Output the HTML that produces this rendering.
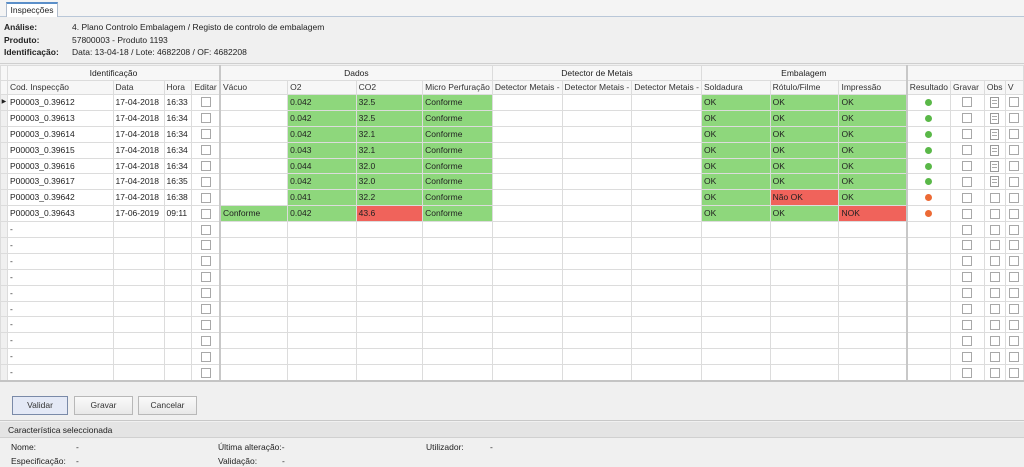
<!DOCTYPE html>
<html><head><meta charset="utf-8"><style>
*{box-sizing:border-box;margin:0;padding:0}
body{width:1024px;height:467px;overflow:hidden;background:#f0f0f0;font-family:"Liberation Sans",sans-serif;font-size:8.5px;color:#222;position:relative}
.abs{position:absolute}
.tabbar{left:0;top:0;width:1024px;height:17px;border-bottom:1px solid #b9c7d8;background:#f4f4f4}
.tab{left:6px;top:2px;width:52px;height:15px;background:#fff;border:1px solid #b0bccc;border-bottom:none;border-top:2px solid #5b8fc9;text-align:center;line-height:12px;font-size:8.5px}
.lbl{font-weight:bold;left:4px}
table{position:absolute;left:0;top:65px;border-collapse:collapse;table-layout:fixed;background:#fff}
td{border:1px solid #dcdcdc;height:15.9px;padding:0 2px;white-space:nowrap;overflow:hidden;font-size:8.5px;line-height:13px}
tr.h td{background:#f7f7f7;height:14px;color:#333}
tr.g td{text-align:center;height:15px;background:#f7f7f7}
.g0{background:#8ed77c!important}.r0{background:#f0635b!important}
.sep{border-right:2px solid #c8c8c8}
.ind{background:#f0f0f0;padding:0;text-align:center;font-size:6px}
.cb{display:block;margin:0 auto;width:10px;height:10px;border:1px solid #a8a8a8;background:#fff}
.dot{display:block;margin:0 auto;width:7px;height:7px;border-radius:50%;background:#5ab848}
.dot.o{background:#ec6a35}
.doc{display:block;margin:0 auto;width:9px;height:11px;border:1px solid #999;background:repeating-linear-gradient(#fff 0 2px,#aaa 2px 3px);background-clip:content-box;padding:2px 1px}
.btn{top:396px;height:19px;border:1px solid #b8b8b8;background:linear-gradient(#fafafa,#e8e8e8);text-align:center;line-height:17px;font-size:8.5px;color:#333}
</style></head><body>
<div class="abs tabbar"></div>
<div class="abs tab">Inspecções</div>
<div class="abs lbl" style="top:22px">Análise:</div><div class="abs" style="left:72px;top:22px">4. Plano Controlo Embalagem / Registo de controlo de embalagem</div>
<div class="abs lbl" style="top:35px">Produto:</div><div class="abs" style="left:72px;top:35px">57800003 - Produto 1193</div>
<div class="abs lbl" style="top:47px">Identificação:</div><div class="abs" style="left:72px;top:47px">Data: 13-04-18 / Lote: 4682208 / OF: 4682208</div>
<div class="abs" style="left:0;top:63px;width:1024px;height:1px;background:#cfcfcf"></div>
<table>
<colgroup><col style="width:7px"><col style="width:106px"><col style="width:51px"><col style="width:28px"><col style="width:28px"><col style="width:68px"><col style="width:69px"><col style="width:67px"><col style="width:69px"><col style="width:68px"><col style="width:68px"><col style="width:67px"><col style="width:69px"><col style="width:69px"><col style="width:68px"><col style="width:43px"><col style="width:34px"><col style="width:21px"><col style="width:18px"></colgroup>
<tr class="g"><td class="ind"></td><td colspan="4" class="sep">Identificação</td><td colspan="4">Dados</td><td colspan="3">Detector de Metais</td><td colspan="3" class="sep">Embalagem</td><td colspan="4"></td></tr>
<tr class="h"><td class="ind"></td><td>Cod. Inspecção</td><td>Data</td><td>Hora</td><td class="sep">Editar</td><td>Vácuo</td><td>O2</td><td>CO2</td><td>Micro Perfuração</td><td>Detector Metais -</td><td>Detector Metais -</td><td>Detector Metais -</td><td>Soldadura</td><td>Rótulo/Filme</td><td class="sep">Impressão</td><td>Resultado</td><td>Gravar</td><td>Obs</td><td>V</td></tr>
<tr><td class="ind">▶</td><td>P00003_0.39612</td><td>17-04-2018</td><td>16:33</td><td class="sep"><i class="cb"></i></td><td></td><td class="g0">0.042</td><td class="g0">32.5</td><td class="g0">Conforme</td><td></td><td></td><td></td><td class="g0">OK</td><td class="g0">OK</td><td class="g0 sep">OK</td><td><i class="dot"></i></td><td><i class="cb"></i></td><td><i class="doc"></i></td><td><i class="cb"></i></td></tr>
<tr><td class="ind"></td><td>P00003_0.39613</td><td>17-04-2018</td><td>16:34</td><td class="sep"><i class="cb"></i></td><td></td><td class="g0">0.042</td><td class="g0">32.5</td><td class="g0">Conforme</td><td></td><td></td><td></td><td class="g0">OK</td><td class="g0">OK</td><td class="g0 sep">OK</td><td><i class="dot"></i></td><td><i class="cb"></i></td><td><i class="doc"></i></td><td><i class="cb"></i></td></tr>
<tr><td class="ind"></td><td>P00003_0.39614</td><td>17-04-2018</td><td>16:34</td><td class="sep"><i class="cb"></i></td><td></td><td class="g0">0.042</td><td class="g0">32.1</td><td class="g0">Conforme</td><td></td><td></td><td></td><td class="g0">OK</td><td class="g0">OK</td><td class="g0 sep">OK</td><td><i class="dot"></i></td><td><i class="cb"></i></td><td><i class="doc"></i></td><td><i class="cb"></i></td></tr>
<tr><td class="ind"></td><td>P00003_0.39615</td><td>17-04-2018</td><td>16:34</td><td class="sep"><i class="cb"></i></td><td></td><td class="g0">0.043</td><td class="g0">32.1</td><td class="g0">Conforme</td><td></td><td></td><td></td><td class="g0">OK</td><td class="g0">OK</td><td class="g0 sep">OK</td><td><i class="dot"></i></td><td><i class="cb"></i></td><td><i class="doc"></i></td><td><i class="cb"></i></td></tr>
<tr><td class="ind"></td><td>P00003_0.39616</td><td>17-04-2018</td><td>16:34</td><td class="sep"><i class="cb"></i></td><td></td><td class="g0">0.044</td><td class="g0">32.0</td><td class="g0">Conforme</td><td></td><td></td><td></td><td class="g0">OK</td><td class="g0">OK</td><td class="g0 sep">OK</td><td><i class="dot"></i></td><td><i class="cb"></i></td><td><i class="doc"></i></td><td><i class="cb"></i></td></tr>
<tr><td class="ind"></td><td>P00003_0.39617</td><td>17-04-2018</td><td>16:35</td><td class="sep"><i class="cb"></i></td><td></td><td class="g0">0.042</td><td class="g0">32.0</td><td class="g0">Conforme</td><td></td><td></td><td></td><td class="g0">OK</td><td class="g0">OK</td><td class="g0 sep">OK</td><td><i class="dot"></i></td><td><i class="cb"></i></td><td><i class="doc"></i></td><td><i class="cb"></i></td></tr>
<tr><td class="ind"></td><td>P00003_0.39642</td><td>17-04-2018</td><td>16:38</td><td class="sep"><i class="cb"></i></td><td></td><td class="g0">0.041</td><td class="g0">32.2</td><td class="g0">Conforme</td><td></td><td></td><td></td><td class="g0">OK</td><td class="r0">Não OK</td><td class="g0 sep">OK</td><td><i class="dot o"></i></td><td><i class="cb"></i></td><td><i class="cb"></i></td><td><i class="cb"></i></td></tr>
<tr><td class="ind"></td><td>P00003_0.39643</td><td>17-06-2019</td><td>09:11</td><td class="sep"><i class="cb"></i></td><td class="g0">Conforme</td><td class="g0">0.042</td><td class="r0">43.6</td><td class="g0">Conforme</td><td></td><td></td><td></td><td class="g0">OK</td><td class="g0">OK</td><td class="r0 sep">NOK</td><td><i class="dot o"></i></td><td><i class="cb"></i></td><td><i class="cb"></i></td><td><i class="cb"></i></td></tr>
<tr><td class="ind"></td><td>-</td><td></td><td></td><td class="sep"><i class="cb"></i></td><td></td><td></td><td></td><td></td><td></td><td></td><td></td><td></td><td></td><td class="sep"></td><td></td><td><i class="cb"></i></td><td><i class="cb"></i></td><td><i class="cb"></i></td></tr>
<tr><td class="ind"></td><td>-</td><td></td><td></td><td class="sep"><i class="cb"></i></td><td></td><td></td><td></td><td></td><td></td><td></td><td></td><td></td><td></td><td class="sep"></td><td></td><td><i class="cb"></i></td><td><i class="cb"></i></td><td><i class="cb"></i></td></tr>
<tr><td class="ind"></td><td>-</td><td></td><td></td><td class="sep"><i class="cb"></i></td><td></td><td></td><td></td><td></td><td></td><td></td><td></td><td></td><td></td><td class="sep"></td><td></td><td><i class="cb"></i></td><td><i class="cb"></i></td><td><i class="cb"></i></td></tr>
<tr><td class="ind"></td><td>-</td><td></td><td></td><td class="sep"><i class="cb"></i></td><td></td><td></td><td></td><td></td><td></td><td></td><td></td><td></td><td></td><td class="sep"></td><td></td><td><i class="cb"></i></td><td><i class="cb"></i></td><td><i class="cb"></i></td></tr>
<tr><td class="ind"></td><td>-</td><td></td><td></td><td class="sep"><i class="cb"></i></td><td></td><td></td><td></td><td></td><td></td><td></td><td></td><td></td><td></td><td class="sep"></td><td></td><td><i class="cb"></i></td><td><i class="cb"></i></td><td><i class="cb"></i></td></tr>
<tr><td class="ind"></td><td>-</td><td></td><td></td><td class="sep"><i class="cb"></i></td><td></td><td></td><td></td><td></td><td></td><td></td><td></td><td></td><td></td><td class="sep"></td><td></td><td><i class="cb"></i></td><td><i class="cb"></i></td><td><i class="cb"></i></td></tr>
<tr><td class="ind"></td><td>-</td><td></td><td></td><td class="sep"><i class="cb"></i></td><td></td><td></td><td></td><td></td><td></td><td></td><td></td><td></td><td></td><td class="sep"></td><td></td><td><i class="cb"></i></td><td><i class="cb"></i></td><td><i class="cb"></i></td></tr>
<tr><td class="ind"></td><td>-</td><td></td><td></td><td class="sep"><i class="cb"></i></td><td></td><td></td><td></td><td></td><td></td><td></td><td></td><td></td><td></td><td class="sep"></td><td></td><td><i class="cb"></i></td><td><i class="cb"></i></td><td><i class="cb"></i></td></tr>
<tr><td class="ind"></td><td>-</td><td></td><td></td><td class="sep"><i class="cb"></i></td><td></td><td></td><td></td><td></td><td></td><td></td><td></td><td></td><td></td><td class="sep"></td><td></td><td><i class="cb"></i></td><td><i class="cb"></i></td><td><i class="cb"></i></td></tr>
<tr><td class="ind"></td><td>-</td><td></td><td></td><td class="sep"><i class="cb"></i></td><td></td><td></td><td></td><td></td><td></td><td></td><td></td><td></td><td></td><td class="sep"></td><td></td><td><i class="cb"></i></td><td><i class="cb"></i></td><td><i class="cb"></i></td></tr>
</table>
<div class="abs" style="left:0;top:380px;width:1024px;height:2px;background:#c4c4c4"></div>
<div class="abs btn" style="left:12px;width:56px;border-color:#7a8aa8;background:#e4e9f6">Validar</div>
<div class="abs btn" style="left:74px;width:59px">Gravar</div>
<div class="abs btn" style="left:138px;width:59px">Cancelar</div>
<div class="abs" style="left:0;top:420px;width:1024px;height:1px;background:#c8c8c8"></div>
<div class="abs" style="left:0;top:422px;width:1024px;height:16px;background:#e4e4e4;border-bottom:1px solid #d0d0d0;padding-left:8px;line-height:16px">Característica seleccionada</div>
<div class="abs" style="left:11px;top:442px">Nome:</div><div class="abs" style="left:76px;top:442px">-</div>
<div class="abs" style="left:11px;top:456px">Especificação:</div><div class="abs" style="left:76px;top:456px">-</div>
<div class="abs" style="left:218px;top:442px">Última alteração:-</div>
<div class="abs" style="left:218px;top:456px">Validação:</div><div class="abs" style="left:282px;top:456px">-</div>
<div class="abs" style="left:426px;top:442px">Utilizador:</div><div class="abs" style="left:490px;top:442px">-</div>
</body></html>
